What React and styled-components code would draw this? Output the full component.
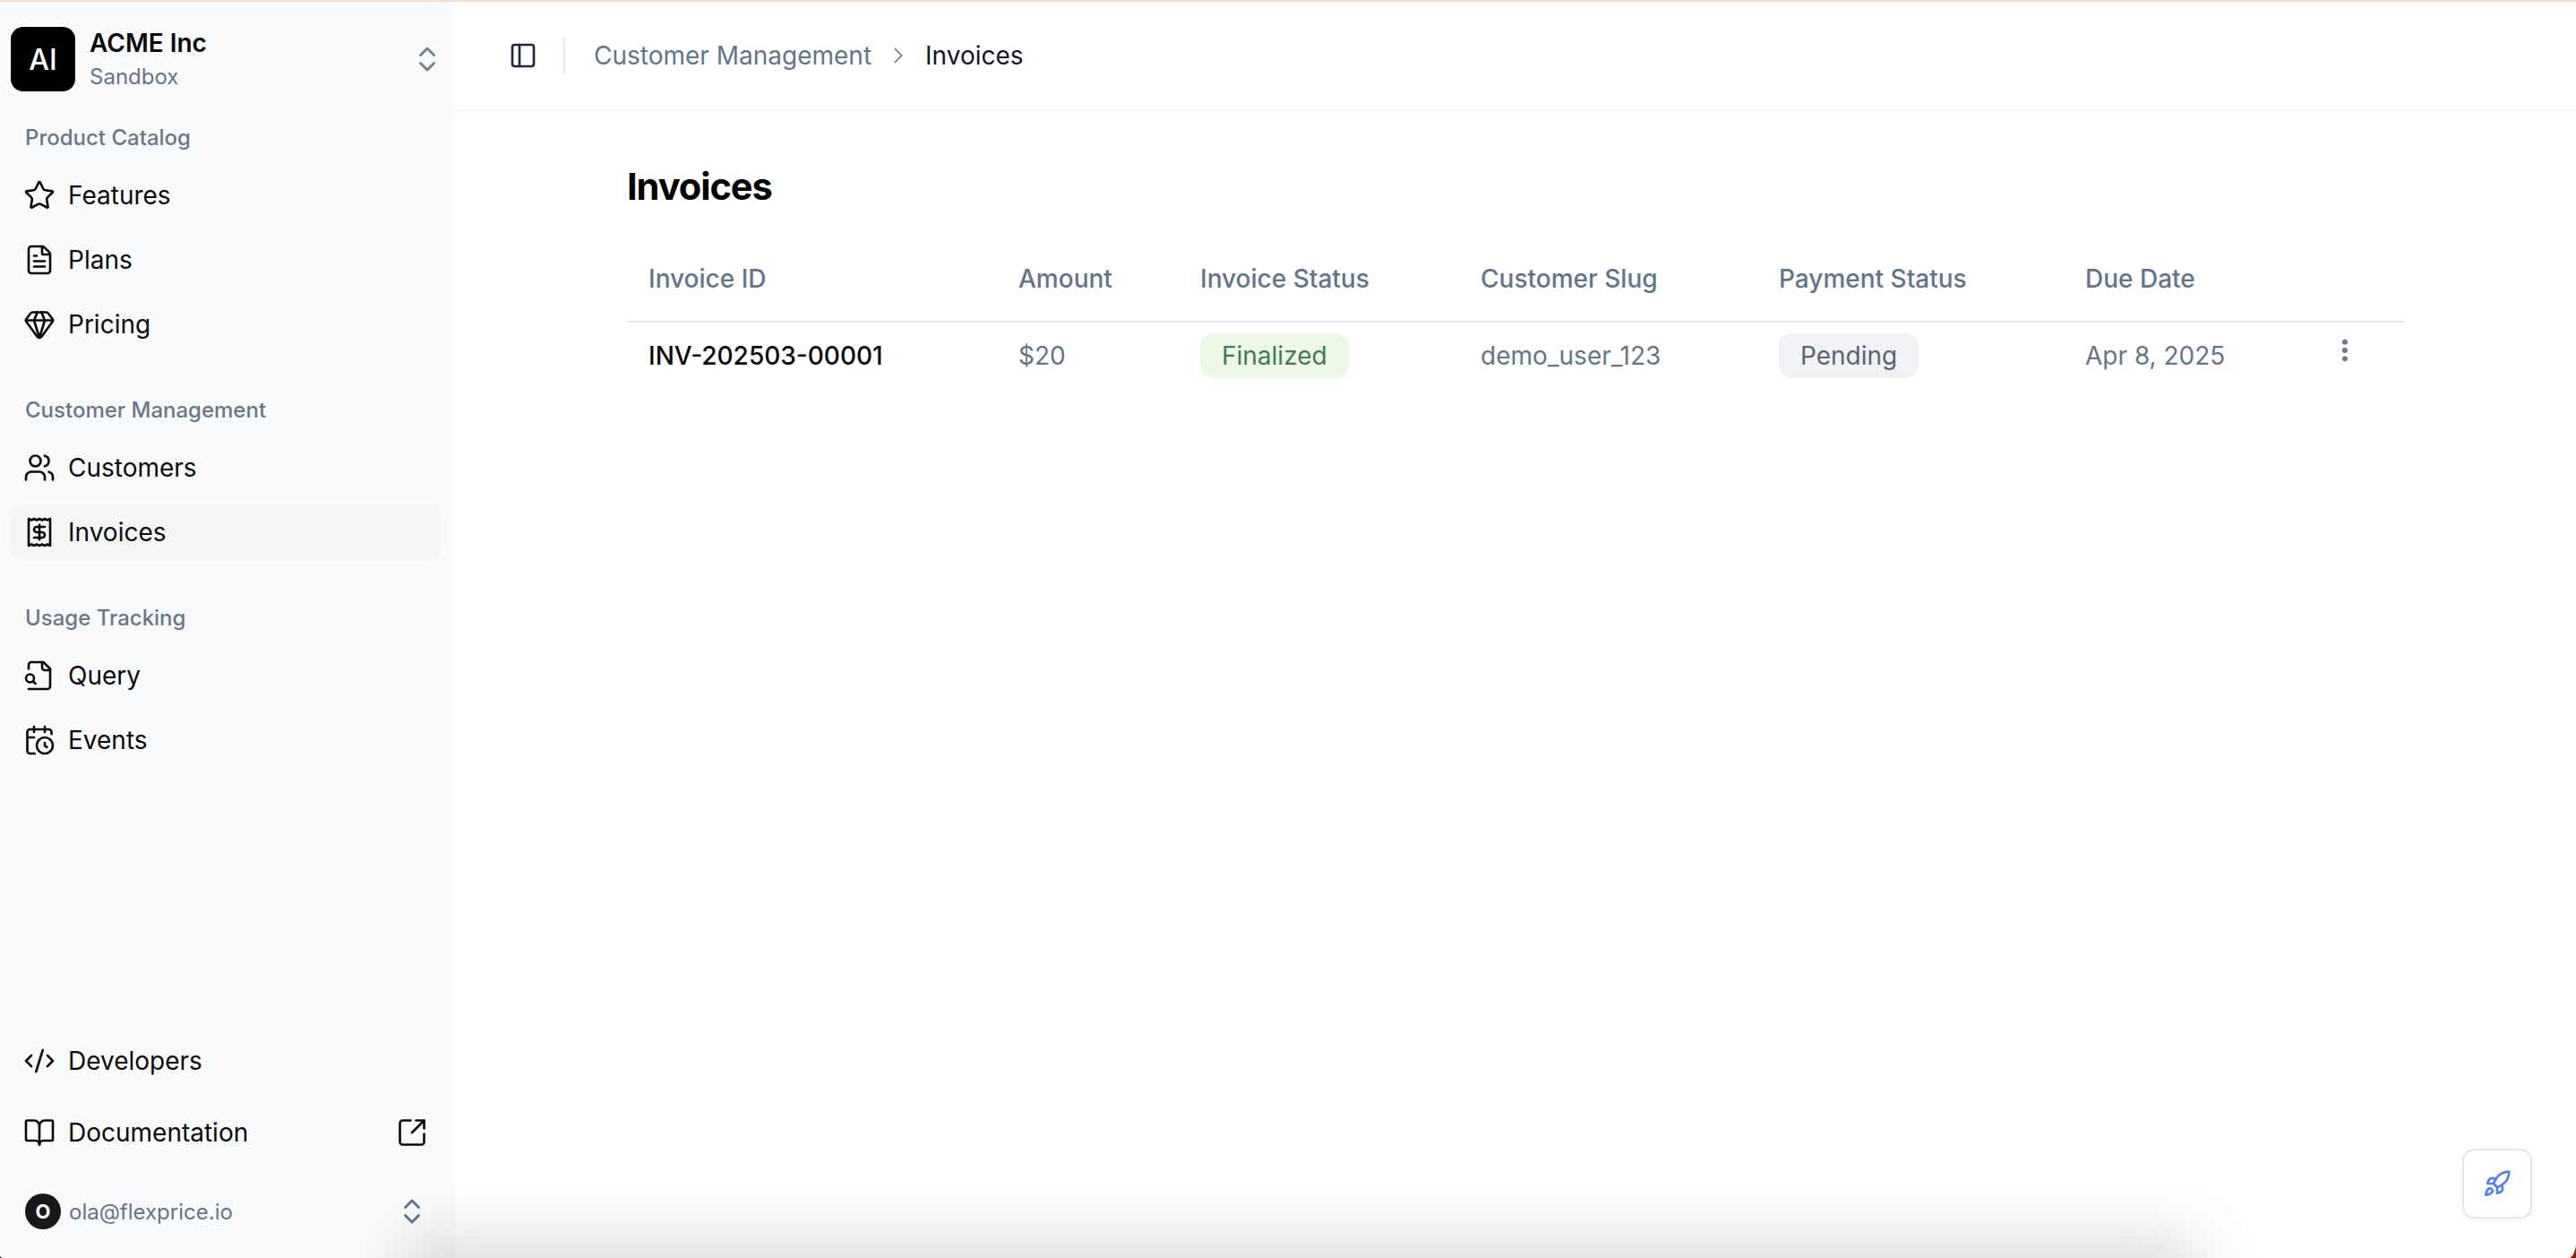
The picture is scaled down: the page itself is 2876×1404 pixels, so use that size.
import React from 'react';
import styled, { createGlobalStyle } from 'styled-components';
import {
  Star, FileText, Gem, Users, Receipt, CalendarClock, CodeXml, BookOpen,
  SquareArrowOutUpRight, ChevronsUpDown, PanelLeft, ChevronRight, EllipsisVertical, Rocket,
} from 'lucide-react';

const GlobalStyle = createGlobalStyle`
  html, body { margin: 0; padding: 0; }
  body { font-family: Inter, "Liberation Sans", sans-serif; background: #fff; }
  * { box-sizing: border-box; }
`;

const Screen = styled.div`
  position: relative;
  width: 2876px;
  height: 1404px;
  overflow: hidden;
  padding-top: 2px;
  background: linear-gradient(to right, #111 0 50%, #7a2c12 50% 100%);
`;

const PeachStrip = styled.div`
  position: absolute;
  top: 0;
  left: 0;
  right: 0;
  height: 2px;
  background: #f0dfd3;
`;

const Window = styled.div`
  position: relative;
  display: flex;
  height: 1402px;
  overflow: hidden;
  background: #fff;
  border-bottom-left-radius: 4px;
  border-bottom-right-radius: 9px 18px;
`;

const Sidebar = styled.aside`
  display: flex;
  flex-direction: column;
  flex: 0 0 508px;
  padding: 28px 16px 0 12px;
  background: #f9fafc;
  box-shadow: 1px 0 5px rgba(0, 0, 0, 0.035);
`;

const Org = styled.div`
  display: flex;
  align-items: center;
  height: 72px;
  gap: 16px;
`;

const OrgLogo = styled.div`
  display: flex;
  align-items: center;
  justify-content: center;
  flex: 0 0 72px;
  height: 72px;
  border-radius: 14px;
  background: #000;
  color: #fff;
  font-size: 32px;
  font-weight: 500;
`;

const OrgText = styled.div`
  flex: 1;
  display: flex;
  flex-direction: column;
  gap: 6px;
`;

const OrgName = styled.div`
  font-size: 28px;
  line-height: 34px;
  font-weight: 600;
  color: #0a0a0a;
`;

const OrgEnv = styled.div`
  font-size: 24px;
  line-height: 30px;
  color: #64748b;
`;

const Updown = styled(ChevronsUpDown)`
  flex: none;
  width: 36px;
  height: 36px;
  margin-right: ${(p) => p.$inset}px;
  color: ${(p) => p.$color || '#7a7f87'};
  stroke-width: 1.9;
`;

const Group = styled.nav`
  display: flex;
  flex-direction: column;
  gap: ${(p) => p.$gap || 8}px;
  margin-top: ${(p) => p.$top}px;
`;

const GroupLabel = styled.div`
  padding-left: 16px;
  height: 40px;
  margin-bottom: 4px;
  font-size: 24px;
  line-height: 40px;
  font-weight: 500;
  color: #6b7789;
`;

const NavItem = styled.div`
  display: flex;
  align-items: center;
  height: 64px;
  gap: 14px;
  padding: 0 14px;
  border-radius: 14px;
  background: ${(p) => (p.$active ? '#f5f5f5' : 'transparent')};
  color: #0a0a0a;
  font-size: 28px;
  font-weight: 400;

  & > svg {
    width: 36px;
    height: 36px;
    flex: none;
    stroke-width: 1.75;
  }
`;

const NavText = styled.span`
  flex: 1;
`;

const Spacer = styled.div`
  flex: 1;
`;

const UserRow = styled.div`
  display: flex;
  align-items: center;
  gap: 9px;
  height: 56px;
  margin: 28px 0 24px;
  padding: 0 0 0 16px;
`;

const Avatar = styled.div`
  display: flex;
  align-items: center;
  justify-content: center;
  flex: 0 0 40px;
  height: 40px;
  border-radius: 50%;
  background: #171717;
  color: #fff;
  font-size: 22px;
  font-weight: 700;
`;

const UserMail = styled.span`
  flex: 1;
  font-size: 24px;
  color: #64748b;
`;

const Main = styled.main`
  flex: 1;
  min-width: 0;
  display: flex;
  flex-direction: column;
  background: #fff;
`;

const TopBar = styled.header`
  display: flex;
  align-items: center;
  height: 122px;
  padding-left: 60px;
  border-bottom: 2px solid #f5f5f5;
  color: #0f172a;
`;

const ToggleIcon = styled(PanelLeft)`
  width: 32px;
  height: 32px;
  flex: none;
  color: #1e293b;
`;

const BarDivider = styled.div`
  width: 2px;
  height: 40px;
  margin: 0 32px 0 29px;
  background: #e8eaee;
`;

const Crumb = styled.span`
  font-size: 28px;
  color: ${(p) => (p.$current ? '#0f172a' : '#64748b')};
`;

const CrumbArrow = styled(ChevronRight)`
  width: 30px;
  height: 30px;
  margin: 0 15px;
  color: #64748b;
  stroke-width: 1.4;
`;

const Content = styled.div`
  padding: 59px 192px 0;
`;

const Title = styled.h1`
  margin: 0 0 31px;
  font-size: 41.5px;
  line-height: 50px;
  font-weight: 700;
  letter-spacing: -0.025em;
  color: #000;
`;

const TableGrid = styled.div`
  display: grid;
  grid-template-columns: 413px 203px 313px 333px 342px 274px 1fr;
`;

const HeadCell = styled.div`
  display: flex;
  align-items: center;
  height: 96px;
  padding-left: 24px;
  border-bottom: 2px solid #e2e8f0;
  font-size: 28px;
  font-weight: 500;
  color: #64748b;
`;

const Cell = styled.div`
  display: flex;
  align-items: center;
  height: 74px;
  padding-left: 24px;
  font-size: 28px;
  font-weight: ${(p) => (p.$strong ? 500 : 400)};
  color: ${(p) => (p.$strong ? '#0a0a0a' : '#64748b')};
`;

const Badge = styled.span`
  display: inline-flex;
  align-items: center;
  height: 50px;
  padding: 0 24px;
  border-radius: 14px;
  background: ${(p) => (p.$tone === 'green' ? '#edf8e6' : '#f0f2f5')};
  color: ${(p) => (p.$tone === 'green' ? '#3f7a5a' : '#5b6472')};
  font-size: 28px;
`;

const MoreIcon = styled(EllipsisVertical)`
  width: 32px;
  height: 32px;
  margin: -12px 0 0 0;
  color: #64748b;
  stroke-width: 2.4;
`;

const FloatButton = styled.button`
  position: absolute;
  right: 49px;
  bottom: 44px;
  display: flex;
  align-items: center;
  justify-content: center;
  width: 78px;
  height: 78px;
  padding: 0;
  border: 2px solid #e6e6e6;
  border-radius: 14px;
  background: #fff;
  box-shadow: 0 2px 6px rgba(0, 0, 0, 0.06);
  color: #4f80f0;

  svg {
    width: 32px;
    height: 32px;
  }
`;

const BottomGlow = styled.div`
  position: absolute;
  left: 480px;
  width: 1945px;
  bottom: -40px;
  height: 30px;
  box-shadow: 0 0 70px 30px rgba(0, 0, 0, 0.15);
  pointer-events: none;
`;

// the file-search icon with the lens hanging off the left edge of the page
function QueryIcon() {
  return (
    <svg viewBox="0 0 24 24" fill="none" stroke="currentColor" strokeWidth="2" strokeLinecap="round" strokeLinejoin="round">
      <path d="M4 22h14a2 2 0 0 0 2-2V7l-5-5H6a2 2 0 0 0-2 2v3" />
      <path d="M14 2v4a2 2 0 0 0 2 2h4" />
      <circle cx="5" cy="14" r="3" />
      <path d="m9 18-1.5-1.5" />
    </svg>
  );
}

const columns = ['Invoice ID', 'Amount', 'Invoice Status', 'Customer Slug', 'Payment Status', 'Due Date', ''];

export default function App() {
  return (
    <Screen>
      <GlobalStyle />
      <PeachStrip />
      <Window>
        <Sidebar>
          <Org>
            <OrgLogo>AI</OrgLogo>
            <OrgText>
              <OrgName>ACME Inc</OrgName>
              <OrgEnv>Sandbox</OrgEnv>
            </OrgText>
            <Updown $inset={-3} />
          </Org>

          <Group $top={32}>
            <GroupLabel>Product Catalog</GroupLabel>
            <NavItem><Star /><NavText>Features</NavText></NavItem>
            <NavItem><FileText /><NavText>Plans</NavText></NavItem>
            <NavItem><Gem /><NavText>Pricing</NavText></NavItem>
          </Group>

          <Group $top={44}>
            <GroupLabel>Customer Management</GroupLabel>
            <NavItem><Users /><NavText>Customers</NavText></NavItem>
            <NavItem $active><Receipt /><NavText>Invoices</NavText></NavItem>
          </Group>

          <Group $top={44}>
            <GroupLabel>Usage Tracking</GroupLabel>
            <NavItem><QueryIcon /><NavText>Query</NavText></NavItem>
            <NavItem><CalendarClock /><NavText>Events</NavText></NavItem>
          </Group>

          <Spacer />

          <Group $top={0} $gap={16}>
            <NavItem><CodeXml /><NavText>Developers</NavText></NavItem>
            <NavItem>
              <BookOpen />
              <NavText>Documentation</NavText>
              <SquareArrowOutUpRight />
            </NavItem>
          </Group>

          <UserRow>
            <Avatar>O</Avatar>
            <UserMail>ola@flexprice.io</UserMail>
            <Updown $color="#64748b" $inset={14} />
          </UserRow>
        </Sidebar>

        <Main>
          <TopBar>
            <ToggleIcon />
            <BarDivider />
            <Crumb>Customer Management</Crumb>
            <CrumbArrow />
            <Crumb $current>Invoices</Crumb>
          </TopBar>

          <Content>
            <Title>Invoices</Title>
            <TableGrid>
              {columns.map((col, i) => (
                <HeadCell key={i}>{col}</HeadCell>
              ))}
              <Cell $strong>INV-202503-00001</Cell>
              <Cell>$20</Cell>
              <Cell><Badge $tone="green">Finalized</Badge></Cell>
              <Cell>demo_user_123</Cell>
              <Cell><Badge>Pending</Badge></Cell>
              <Cell>Apr 8, 2025</Cell>
              <Cell><MoreIcon /></Cell>
            </TableGrid>
          </Content>
        </Main>

        <BottomGlow />
        <FloatButton><Rocket /></FloatButton>
      </Window>
    </Screen>
  );
}
